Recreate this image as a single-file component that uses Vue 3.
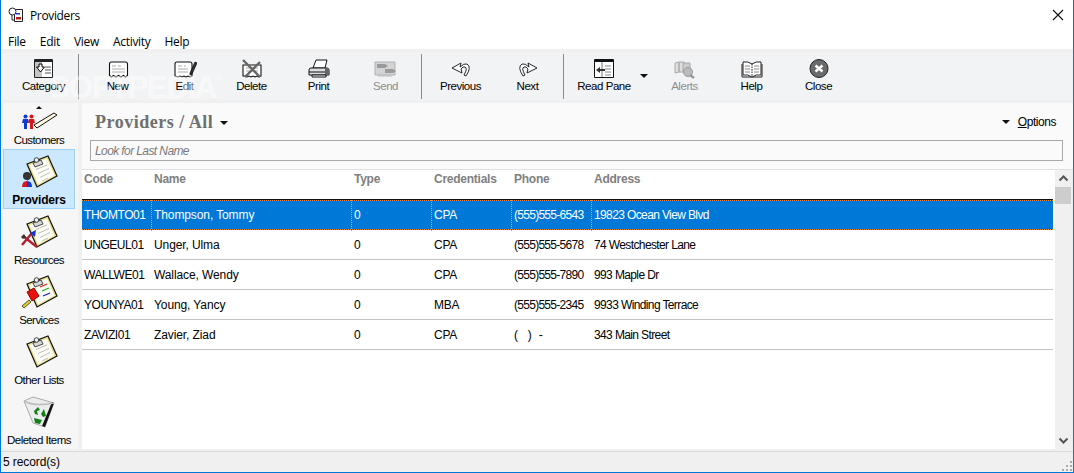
<script setup>
const board = `<path d="M8 9L29 1l9 20-20 11z" fill="#e6dc80" stroke="#111" stroke-width="1.200"/><path d="M10.500 10L28 3.500l7.500 17L19 29.500z" fill="#fdfdf6"/>`
const lines = `<path d="M17 14.500l11-4.500M19 18.500l11-5M21 22.500l10-5M23 26l6-3" stroke="#bdbdbd" stroke-width="1" fill="none"/>`
const pin = `<path d="M14 8l8-3 2 4-8 3z" fill="#d8d8d8" stroke="#333" stroke-width=".9"/><circle cx="17.500" cy="5" r="2.300" fill="#eee" stroke="#333" stroke-width=".9"/>`
const clip = board + lines + pin
const icons = {
  category: `<path d="M2.500.5h18v18h-18z" fill="#fff" stroke="#222"/><path d="M2 1h19v2H2z" fill="#222"/><path d="M3 3h7v15H3z" fill="#c4c4c4"/><path d="M4.500 8H7V5h3v3h2.500L8.500 13z" fill="#fff" stroke="#000"/><path d="M13 8h6M13 11h6M13 14h6" stroke="#555"/>`,
  new: `<path d="M3.500 16.500V5q0-2 2-2h14q2 0 2 2v11.500l-2 1.500-2-1.500-2.500 1.500-2.500-1.500-2.500 1.500-2.500-1.500-2 1.500z" fill="#fff" stroke="#111" stroke-width="1.100"/><path d="M6 7h4M12 7h3M6 10h13M6 13h13" stroke="#aaa"/>`,
  edit: `<path d="M2 17V5q0-2 2-2h13q2 0 2 2v12l-2 1-2-1-2 1-2-1-2 1-2-1-2 1z" fill="#fff" stroke="#111" stroke-width="1.100"/><path d="M5 7h4M11 7h2M5 10h10M5 13h10" stroke="#aaa"/><path d="M17 14l5-11 2 1-5 11-2 1z" fill="#333" stroke="#000" stroke-width=".7"/>`,
  delete: `<path d="M3 17V6h18v11l-2 1-2-1-2 1-2-1-2 1-2-1-2 1-2-1z" fill="#fff" stroke="#111" stroke-width="1.100"/><path d="M6 9h12M6 12h12" stroke="#aaa"/><path d="M3 1l17 17M20 3L5 18" stroke="#666" stroke-width="2.400"/>`,
  print: `<path d="M6 9l3-8h11l-2 8z" fill="#fff" stroke="#111"/><path d="M2 11q0-2 2-2h16q2 0 2 2v5H2z" fill="#ddd" stroke="#111"/><path d="M2 13h20" stroke="#111"/><path d="M18 9h4v7h-4z" fill="#666"/><path d="M5 16h14v2H5z" fill="#fff" stroke="#111"/>`,
  send: `<path d="M1 3h20v13H1z" fill="#d4d4d4" stroke="#b0b0b0"/><path d="M3 5h8l3 2-3 2H3zM11 10h8l3 2-3 2h-8z" fill="#9a9a9a"/><path d="M4 17h14" stroke="#bbb"/>`,
  prev: `<path d="M3 9l9-5-1 4q4-4 7-3 5 3-1 12l-2-1q4-7 1-8-2-1-4 2l1 4z" fill="#fff" stroke="#111" stroke-width=".900"/>`,
  next: `<path d="M21 9l-9-5 1 4q-4-4-7-3-5 3 1 12l2-1q-4-7-1-8 2-1 4 2l-1 4z" fill="#fff" stroke="#111" stroke-width=".900"/>`,
  read: `<path d="M2.500.5h19v18h-19z" fill="#fff" stroke="#111"/><path d="M2 1h20v2H2z" fill="#111"/><path d="M10 3v15" stroke="#777"/><path d="M13 7h6M13 10h6M13 13h6M13 16h6" stroke="#888"/><path d="M4 11l4-3v2h5v2H8v2z" fill="#333"/>`,
  alerts: `<path d="M2 4l4-1v10l-4 1zM6 3h5v10H6z" fill="#ddd" stroke="#aaa"/><path d="M10 4h7v8h-7z" fill="#ccc" stroke="#aaa"/><circle cx="15" cy="13" r="4.500" fill="#bbb" stroke="#999"/><path d="M17 16l4 3" stroke="#999" stroke-width="2.500"/>`,
  help: `<path d="M2 5v13h20V5" fill="#fff" stroke="#222"/><path d="M3 3q5-1 9 2 4-3 9-2v13q-5-1-9 2-4-3-9-2z" fill="#fff" stroke="#222"/><path d="M12 5v13" stroke="#222" stroke-dasharray="1.500 1"/><path d="M5 7h5M5 10h5M5 13h5M14 7h5M14 10h5M14 13h5" stroke="#888"/>`,
  close: `<circle cx="12" cy="9.500" r="9" fill="#6b6b6b" stroke="#222"/><path d="M8.500 6.500l7 6M15.500 6.500l-7 6" stroke="#fff" stroke-width="2.400"/>`,
  customers: `<path d="M15 14L35 2l3 2-20 13z" fill="#fffbe0" stroke="#111"/><path d="M5 18v-6H3l1-4h5l1 4H8v6z" fill="#1038d8"/><path d="M11 18v-6H9l1-4h5l1 4h-2v6z" fill="#d81818"/><circle cx="6.500" cy="5.500" r="2" fill="#1038d8"/><circle cx="12.500" cy="5.500" r="2" fill="#d81818"/>`,
  providers: clip + `<circle cx="8" cy="21" r="4" fill="#333"/><path d="M8 25c3 0 3-4 3-6" stroke="#333" fill="none"/><path d="M3 32q0-6 5-6v6z" fill="#d81818"/><path d="M8 32v-6q5 0 5 6z" fill="#1038d8"/>`,
  resources: clip + `<path d="M4 21l14 11M13 18L3 30" stroke="#b02030" stroke-width="2.400"/><path d="M11 18l6-3-1 7z" fill="#1038d8"/><path d="M2 22l3-3 2 3-3 2z" fill="#333"/>`,
  services: board + pin + `<path d="M21 12l7-3" stroke="#e01818" stroke-width="1.300"/><path d="M23 16l7-3" stroke="#18b018" stroke-width="1.300"/><path d="M24 21l7-3" stroke="#1818d8" stroke-width="1.300"/><path d="M8 17l7-4 5 8-7 5z" fill="#e81010" stroke="#900"/><path d="M10 25l-7 6 2 2 7-6z" fill="#e0d020" stroke="#554"/>`,
  other: clip,
  deleted: `<path d="M5 6l9-4 21 6-9 24-12-4z" fill="#ececec" stroke="#aaa"/><path d="M35 8l-9 24-3-1 10-24z" fill="#111"/><path d="M5 6q10 6 30 2" fill="none" stroke="#bbb" stroke-width="1.500"/><path d="M15 16l4-4 2 3-3 1 1 4-3-1zM25 14l2 7-3 1-2-3zM15 23l8 2-2 4-5-1z" fill="#108018"/>`
}
const group1 = [{ l: 'New', i: 'new' }, { l: 'Edit', i: 'edit' }, { l: 'Delete', i: 'delete' }, { l: 'Print', i: 'print' }, { l: 'Send', i: 'send', d: true }]
const group2 = [{ l: 'Previous', i: 'prev' }, { l: 'Next', i: 'next' }]
const group3 = [{ l: 'Alerts', i: 'alerts', d: true }, { l: 'Help', i: 'help' }, { l: 'Close', i: 'close' }]
const side = [
  { l: 'Customers', i: 'customers', first: true },
  { l: 'Providers', i: 'providers', sel: true },
  { l: 'Resources', i: 'resources' },
  { l: 'Services', i: 'services' },
  { l: 'Other Lists', i: 'other' },
  { l: 'Deleted Items', i: 'deleted' }
]
const rows = [
  ['THOMTO01', 'Thompson, Tommy', '0', 'CPA', '(555)555-6543', '19823 Ocean View Blvd'],
  ['UNGEUL01', 'Unger, Ulma', '0', 'CPA', '(555)555-5678', '74 Westchester Lane'],
  ['WALLWE01', 'Wallace, Wendy', '0', 'CPA', '(555)555-7890', '993 Maple Dr'],
  ['YOUNYA01', 'Young, Yancy', '0', 'MBA', '(555)555-2345', '9933 Winding Terrace'],
  ['ZAVIZI01', 'Zavier, Ziad', '0', 'CPA', '(\u00a0\u00a0\u00a0\u00a0)\u00a0\u00a0\u00a0-', '343 Main Street']
]
const heads = ['Code', 'Name', 'Type', 'Credentials', 'Phone', 'Address']
</script>

<template>
  <div class="win">
    <div class="title">
      <svg class="appicon" width="16" height="16" viewBox="0 0 16 16"><path d="M6.500 2.500h8v12h-8z" fill="#fff" stroke="#222"/><path d="M8 6h4v1.500H8z" fill="#1038d8"/><path d="M8 10h5v2.500H8z" fill="#c01818"/><circle cx="4.500" cy="4.500" r="3.500" fill="#fff" stroke="#222"/><path d="M4 8v5h3" fill="none" stroke="#222"/></svg>
      <span class="title-text">Providers</span>
      <svg class="x" width="12" height="12" viewBox="0 0 12 12"><path d="M1 1l10 10M11 1L1 11" stroke="#111" stroke-width="1.100"/></svg>
    </div>
    <div class="menu"><span>File</span><span>Edit</span><span>View</span><span>Activity</span><span>Help</span></div>
    <div class="toolbar">
      <div class="btn"><svg width="24" height="20" viewBox="0 0 24 20" v-html="icons.category"></svg><span>Category</span></div>
      <i class="sep first"></i>
      <div v-for="b in group1" :key="b.l" class="btn" :class="{ dis: b.d }"><svg width="24" height="20" viewBox="0 0 24 20" v-html="icons[b.i]"></svg><span>{{ b.l }}</span></div>
      <i class="sep"></i>
      <div v-for="b in group2" :key="b.l" class="btn" :class="{ dis: b.d }"><svg width="24" height="20" viewBox="0 0 24 20" v-html="icons[b.i]"></svg><span>{{ b.l }}</span></div>
      <i class="sep"></i>
      <div class="btn read"><svg width="24" height="20" viewBox="0 0 24 20" v-html="icons.read"></svg><span>Read Pane</span></div>
      <i class="caret tb"></i>
      <div v-for="b in group3" :key="b.l" class="btn" :class="{ dis: b.d }"><svg width="24" height="20" viewBox="0 0 24 20" v-html="icons[b.i]"></svg><span>{{ b.l }}</span></div>
      <div class="wm">SOFTPEDIA<sup>®</sup></div>
    </div>
    <div class="body">
      <aside class="side">
        <i class="side-up"></i>
        <div v-for="s in side" :key="s.l" class="item" :class="{ sel: s.sel, first: s.first }">
          <svg :width="40" :height="s.first ? 22 : 38" :viewBox="s.first ? '0 0 40 22' : '0 0 40 38'" v-html="icons[s.i]"></svg>
          <span>{{ s.l }}</span>
        </div>
      </aside>
      <main class="main">
        <div class="head">
          <div class="head-row">
            <span class="h-title">Providers / All</span>
            <i class="caret big"></i>
            <span class="options"><i class="caret"></i><span><u>O</u>ptions</span></span>
          </div>
          <div class="search">Look for Last Name</div>
        </div>
        <div class="table-wrap">
          <div class="table">
            <div class="r hdr"><span v-for="h in heads" :key="h">{{ h }}</span></div>
            <div v-for="(r, n) in rows" :key="r[0]" class="r" :class="{ on: n === 0 }">
              <span v-for="(c, k) in r" :key="k">{{ c }}</span>
            </div>
          </div>
          <div class="scroll">
            <svg width="17" height="17" viewBox="0 0 17 17"><path d="M4.500 10.500l4-4 4 4" fill="none" stroke="#555" stroke-width="2"/></svg>
            <div class="thumb"></div>
            <div class="grow"></div>
            <svg width="17" height="17" viewBox="0 0 17 17"><path d="M4.500 6.500l4 4 4-4" fill="none" stroke="#555" stroke-width="2"/></svg>
          </div>
        </div>
      </main>
    </div>
    <div class="status"><span>5 record(s)</span>
      <svg class="grip" width="12" height="12" viewBox="0 0 12 12"><path d="M9 1h2v2H9zM5 5h2v2H5zM9 5h2v2H9zM1 9h2v2H1zM5 9h2v2H5zM9 9h2v2H9z" fill="#aaa"/></svg>
    </div>
  </div>
</template>

<style>
html, body { margin: 0; background: #fff; }
</style>
<style scoped>
.win {
  width: 1074px; height: 473px; box-sizing: border-box;
  border: 1px solid #0078d7; border-top: 0;
  display: flex; flex-direction: column; background: #fff; overflow: hidden;
  font: 12px "Liberation Sans", sans-serif; color: #000;
}
.title { height: 30px; flex: none; display: flex; align-items: center; padding: 0 9px 0 7px; gap: 6px; font-family: "Open Sans", sans-serif; }
.title-text { flex: 1; font-size: 12px; letter-spacing: -.35px; }
.menu { height: 19px; flex: none; box-sizing: border-box; display: flex; align-items: center; padding: 3px 0 0 7px; gap: 14px; font: 12px "Open Sans", sans-serif; letter-spacing: -.3px; }
.toolbar {
  height: 54px; flex: none; box-sizing: border-box; position: relative;
  background: #f2f3f5; border-top: 4px solid #f0f0f0; border-bottom: 3px solid #f0f0f0;
  display: flex; align-items: stretch; padding-left: 9px;
  font-size: 11.500px; letter-spacing: -.45px;
}
.btn { width: 67px; flex: none; display: flex; flex-direction: column; align-items: center; padding-top: 6px; box-sizing: border-box; white-space: nowrap; }
.btn span { line-height: 14px; }
.btn.read { width: 70px; }
.btn.dis span { color: #8e8e8e; }
.sep { width: 1px; background: #8c8c8c; flex: none; }
.sep.first { margin: 1px 5px 1px 1px; }
.sep:not(.first) { margin: 1px 5px 1px 2px; }
.caret { width: 0; height: 0; border: 4px solid transparent; border-top: 4px solid #111; border-bottom: 0; display: inline-block; flex: none; }
.caret.tb { margin: 21px 3px 0 1px; }
.wm {
  position: absolute; left: 48px; top: 16px; font: bold 32px "Liberation Sans", sans-serif; letter-spacing: -1.800px;
  color: rgba(255,255,255,.48); pointer-events: none; line-height: 36px; white-space: nowrap;
}
.wm sup { font-size: 9px; vertical-align: 16px; line-height: 0; letter-spacing: 0; }
.body { flex: 1; min-height: 0; display: flex; background: #f0f0f0; }
.side { width: 75px; flex: none; margin: 0 4px 2px 2px; background: #f6f6f6; position: relative; display: flex; flex-direction: column; overflow: hidden; font-size: 11.500px; letter-spacing: -.55px; white-space: nowrap; }
.side-up { position: absolute; left: 33px; top: 3px; border: 3px solid transparent; border-bottom: 3px solid #111; border-top: 0; }
.item { height: 60px; flex: none; width: 72px; box-sizing: border-box; display: flex; flex-direction: column; align-items: center; padding-top: 5px; border: 1px solid transparent; line-height: 14px; }
.item.first { height: 46px; padding-top: 7px; }
.item.sel { background: #cce8ff; border-color: #99d1ff; font-weight: bold; font-size: 12px; letter-spacing: -.2px; }
.main { flex: 1; min-width: 0; margin-bottom: 2px; display: flex; flex-direction: column; background: #fff; }
.head { height: 67px; flex: none; box-sizing: border-box; background: #fafafa; border-bottom: 1px solid #e0e0e0; padding: 0 10px 0 8px; }
.head-row { height: 37px; box-sizing: border-box; padding-top: 1px; display: flex; align-items: center; }
.h-title { font: bold 18px "Liberation Serif", serif; color: #6f6f6f; padding-left: 5px; letter-spacing: .5px; }
.caret.big { margin-left: 7px; margin-top: 2px; }
.options { margin-left: auto; display: flex; align-items: center; gap: 8px; padding-right: 7px; letter-spacing: -.45px; }
.search { height: 21px; box-sizing: border-box; border: 1px solid #a8a8a8; padding-left: 4px; line-height: 20px; font-style: italic; color: #7a7a7a; letter-spacing: -.6px; }
.table-wrap { flex: 1; min-height: 0; display: flex; }
.table { flex: 1; min-width: 0; letter-spacing: -.25px; }
.r { display: grid; grid-template-columns: 70px 200px 80px 80px 80px 1fr; height: 30px; box-sizing: border-box; border-bottom: 1px solid #c4c4c4; align-items: center; white-space: nowrap; }
.r span { padding-left: 2px; }
.r:not(.hdr) span:nth-child(1) { letter-spacing: -.45px; }
.r:not(.hdr) span:nth-child(2) { letter-spacing: -.1px; }
.r:not(.hdr) span:nth-child(5) { letter-spacing: -.72px; }
.r:not(.hdr) span:nth-child(6) { letter-spacing: -.62px; }
.hdr { border: 0; font-weight: bold; color: #808080; align-items: start; padding-top: 2px; }
.on {
  color: #fff; border-bottom: 0; box-shadow: 0 -1px 0 #111;
  background:
    repeating-linear-gradient(90deg, #f08a24 0 1px, #3a3a3a 1px 2px) top / 100% 1px no-repeat,
    repeating-linear-gradient(90deg, #f08a24 0 1px, #3a3a3a 1px 2px) bottom / 100% 1px no-repeat,
    #0078d7;
}
.on span { align-self: stretch; line-height: 31px; border-right: 1px dotted #e8a060; }
.on span:last-child { border-right: 0; }
.scroll { width: 18px; flex: none; margin-left: 2px; background: #f0f0f0; display: flex; flex-direction: column; }
.thumb { height: 17px; width: 16px; background: #cdcdcd; flex: none; }
.grow { flex: 1; }
.status { height: 21px; flex: none; box-sizing: border-box; display: flex; align-items: center; justify-content: space-between; padding-left: 2px; background: #f0f0f0; border-top: 1px solid #dadada; letter-spacing: -.1px; }
.grip { align-self: flex-end; }
</style>
